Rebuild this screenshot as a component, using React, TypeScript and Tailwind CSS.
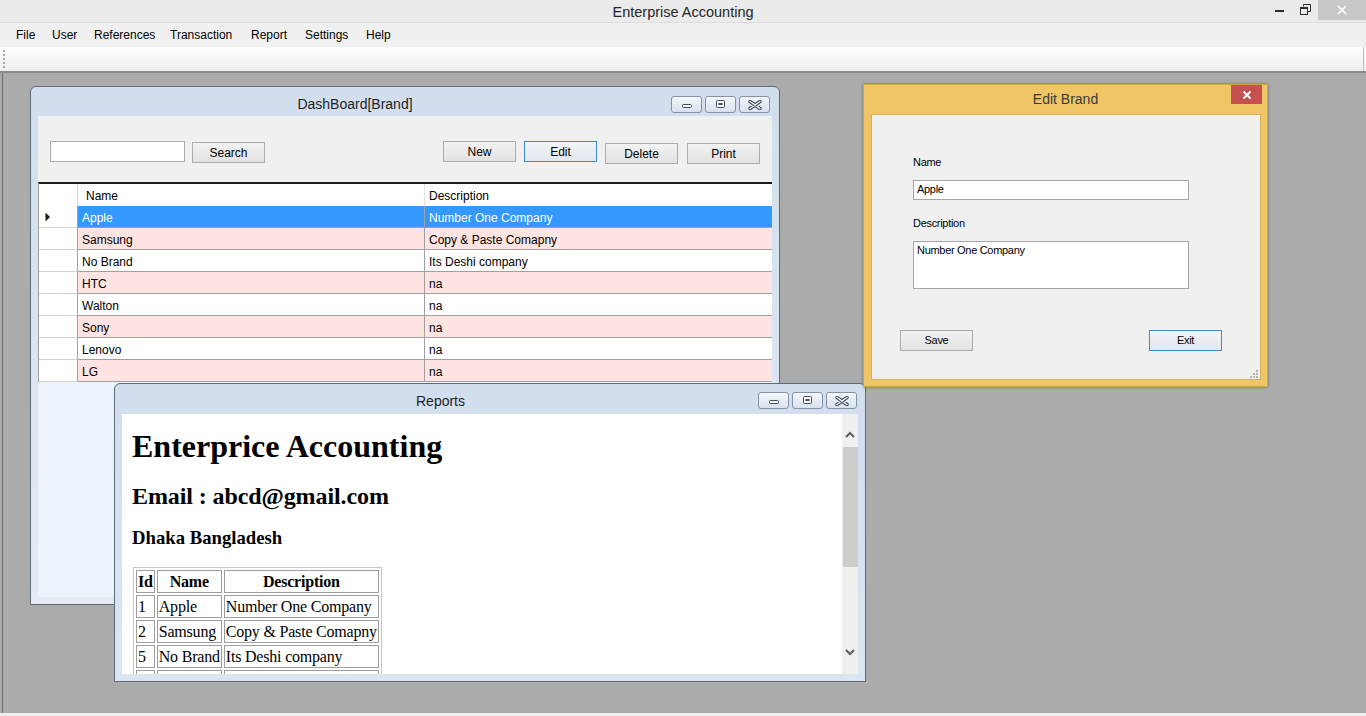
import React from 'react';

const rows = [
  { name: 'Apple', desc: 'Number One Company' },
  { name: 'Samsung', desc: 'Copy & Paste Comapny' },
  { name: 'No Brand', desc: 'Its Deshi company' },
  { name: 'HTC', desc: 'na' },
  { name: 'Walton', desc: 'na' },
  { name: 'Sony', desc: 'na' },
  { name: 'Lenovo', desc: 'na' },
  { name: 'LG', desc: 'na' },
];

const reportRows = [
  { id: '1', name: 'Apple', desc: 'Number One Company' },
  { id: '2', name: 'Samsung', desc: 'Copy & Paste Comapny' },
  { id: '5', name: 'No Brand', desc: 'Its Deshi company' },
  { id: '', name: '', desc: '' },
];

function CtlBtn({ kind }: { kind: 'min' | 'max' | 'close' }) {
  return (
    <div className="w-[31px] h-[17px] rounded-[3px] border border-[#8593a8] bg-linear-to-b from-[#f5f8fc] to-[#d7e1ee] flex items-center justify-center">
      {kind === 'min' && (
        <svg width="12" height="8" viewBox="0 0 12 8">
          <rect x="1.5" y="3.5" width="9" height="3" rx="1" fill="#ffffff" stroke="#3e4b5e" />
        </svg>
      )}
      {kind === 'max' && (
        <svg width="11" height="9" viewBox="0 0 11 9">
          <rect x="1.5" y="0.5" width="8" height="7" rx="1" fill="#ffffff" stroke="#3e4b5e" />
          <rect x="3.5" y="3" width="4" height="2" fill="#3e4b5e" />
        </svg>
      )}
      {kind === 'close' && (
        <svg width="14" height="10" viewBox="0 0 14 10">
          <path d="M2 1.5 L12 8.5 M12 1.5 L2 8.5" stroke="#3e4b5e" strokeWidth="3.4" strokeLinecap="round" />
          <path d="M2 1.5 L12 8.5 M12 1.5 L2 8.5" stroke="#ffffff" strokeWidth="1.4" strokeLinecap="round" />
        </svg>
      )}
    </div>
  );
}

function MdiTitle({ title, btnClass }: { title: string; btnClass: string }) {
  return (
    <div className="flex items-start h-full">
      <div className="flex-1 pl-[8px] mt-[8px] text-center text-[14px] leading-[18px] text-[#1e1e1e]">{title}</div>
      <div className={btnClass}>
        <CtlBtn kind="min" />
        <CtlBtn kind="max" />
        <CtlBtn kind="close" />
      </div>
    </div>
  );
}

function Btn({ label, cls, focused }: { label: string; cls: string; focused?: boolean }) {
  return (
    <div
      className={
        'w-[73px] h-[21px] flex items-center justify-center pt-[1px] text-[12px] leading-[14px] border bg-linear-to-b ' +
        (focused ? 'border-[#3d8ad6] from-[#f1f4f8] to-[#e3e8ee] ' : 'border-[#acacac] from-[#f2f2f2] to-[#e2e2e2] ') +
        cls
      }
    >
      {label}
    </div>
  );
}

function Dashboard() {
  return (
    <div className="absolute left-[30px] top-[13px] w-[750px] h-[519px] rounded-t-[6px] border border-[#5f6a78] bg-linear-to-b from-[#d2deed] to-[#e2ebf6] flex flex-col">
      <div className="h-[29px] shrink-0">
        <MdiTitle title="DashBoard[Brand]" btnClass="flex gap-[3px] mr-[9px] mt-[9px]" />
      </div>
      <div className="mx-[7px] mb-[7px] flex-1 flex flex-col bg-[#edf3fa] overflow-hidden">
        <div className="h-[66px] shrink-0 bg-[#f0f0f0] flex items-start">
          <div className="ml-[12px] mt-[25px] w-[135px] h-[21px] bg-white border border-[#a9a9a9]" />
          <Btn label="Search" cls="ml-[7px] mt-[26px]" />
          <Btn label="New" cls="ml-[178px] mt-[25px]" />
          <Btn label="Edit" cls="ml-[8px] mt-[25px]" focused />
          <Btn label="Delete" cls="ml-[8px] mt-[27px]" />
          <Btn label="Print" cls="ml-[9px] mt-[27px]" />
        </div>
        <div className="border-t-2 border-[#1c1c1c] border-l border-l-[#a0a0a0] text-[12px]">
          <div className="grid grid-cols-[39px_347px_348px] h-[22px] bg-white">
            <div className="border-r border-[#d4d4d4]" />
            <div className="border-r border-[#e2e2e2] pl-[8px] pt-[3px] leading-[18px]">Name</div>
            <div className="pl-[4px] pt-[3px] leading-[18px]">Description</div>
          </div>
          {rows.map((r, i) => {
            const sel = i === 0;
            const bg = sel ? 'bg-[#3399ff] text-white' : i % 2 === 1 ? 'bg-[#ffe4e1]' : 'bg-white';
            return (
              <div key={r.name} className="grid grid-cols-[39px_347px_348px] h-[22px]">
                <div className="bg-white border-r border-r-[#a0a0a0] border-b border-b-[#d4d4d4] flex items-center pl-[6px]">
                  {sel && (
                    <svg width="6" height="10" viewBox="0 0 6 10">
                      <path d="M0.5 0.5 L5 5 L0.5 9.5 Z" fill="#1a1a1a" />
                    </svg>
                  )}
                </div>
                <div className={'border-r border-b border-[#a0a0a0] pl-[4px] pt-[3px] leading-[18px] ' + bg}>{r.name}</div>
                <div className={'border-r border-b border-[#a0a0a0] pl-[4px] pt-[3px] leading-[18px] ' + bg}>{r.desc}</div>
              </div>
            );
          })}
        </div>
        <div className="flex-1 bg-[#edf3fa]" />
      </div>
    </div>
  );
}

function Reports() {
  return (
    <div className="absolute left-[114px] top-[310px] w-[752px] h-[299px] rounded-t-[6px] border border-[#5f6a78] bg-linear-to-b from-[#d2deed] to-[#dbe6f3] flex flex-col">
      <div className="h-[30px] shrink-0">
        <MdiTitle title="Reports" btnClass="flex gap-[3px] mr-[8px] mt-[8px]" />
      </div>
      <div className="mx-[7px] mb-[7px] flex-1 flex bg-white overflow-hidden">
        <div className="flex-1 overflow-hidden pl-[10px] font-['Liberation_Serif','Times_New_Roman',serif] text-black">
          <div className="pt-[16px] text-[32px] leading-[32px] font-bold">Enterprice Accounting</div>
          <div className="mt-[22px] text-[24px] leading-[24px] font-bold tracking-[-0.1px]">Email : abcd@gmail.com</div>
          <div className="mt-[20px] text-[18.72px] leading-[19px] font-bold">Dhaka Bangladesh</div>
          <table className="mt-[20px] ml-[1px] border border-[#c6c6c6] border-separate border-spacing-[2px] text-[16px] leading-[19px] tracking-[-0.2px]">
            <thead>
              <tr>
                <th className="border border-[#9d9d9d] p-[1px] font-bold text-center">Id</th>
                <th className="border border-[#9d9d9d] p-[1px] font-bold text-center">Name</th>
                <th className="border border-[#9d9d9d] p-[1px] font-bold text-center">Description</th>
              </tr>
            </thead>
            <tbody>
              {reportRows.map((r, i) => (
                <tr key={i}>
                  <td className="border border-[#9d9d9d] p-[1px] h-[23px]">{r.id}</td>
                  <td className="border border-[#9d9d9d] p-[1px] h-[23px]">{r.name}</td>
                  <td className="border border-[#9d9d9d] p-[1px] h-[23px]">{r.desc}</td>
                </tr>
              ))}
            </tbody>
          </table>
        </div>
        <div className="w-[16px] shrink-0 bg-[#f0f0f0] flex flex-col items-center">
          <div className="h-[33px] w-full flex items-start justify-center pt-[17px]">
            <svg width="10" height="7" viewBox="0 0 10 7">
              <path d="M1 6 L5 2 L9 6" stroke="#606060" strokeWidth="2" fill="none" />
            </svg>
          </div>
          <div className="w-[15px] h-[120px] bg-[#cdcdcd]" />
          <div className="flex-1" />
          <div className="h-[30px] w-full flex items-start justify-center pt-[5px]">
            <svg width="10" height="7" viewBox="0 0 10 7">
              <path d="M1 1 L5 5 L9 1" stroke="#606060" strokeWidth="2" fill="none" />
            </svg>
          </div>
        </div>
      </div>
    </div>
  );
}

function EditBrand() {
  return (
    <div className="absolute left-[863px] top-[11px] w-[405px] h-[303px] bg-[#f0c566] border border-[#cfa341] flex flex-col shadow-[0_0_3px_rgba(0,0,0,0.35)]">
      <div className="h-[29px] shrink-0 grid grid-cols-[1fr_auto_1fr]">
        <div />
        <div className="text-[14px] leading-[29px] text-[#3a3a3a]">Edit Brand</div>
        <div className="flex justify-end items-start">
          <div className="w-[31px] h-[19px] mr-[5px] bg-[#c75050] flex items-center justify-center">
            <svg width="10" height="10" viewBox="0 0 10 10">
              <path d="M1.5 1.5 L8.5 8.5 M8.5 1.5 L1.5 8.5" stroke="#ffffff" strokeWidth="1.8" />
            </svg>
          </div>
        </div>
      </div>
      <div className="relative ml-[7px] mr-[6px] mb-[6px] flex-1 bg-[#f0f0f0] border border-[#d6b158] text-[11px] tracking-[-0.3px]">
        <div className="flex flex-col pl-[41px]">
          <div className="mt-[41px] leading-[13px]">Name</div>
          <div className="mt-[11px] w-[276px] h-[20px] bg-white border border-[#a6a6a6] pl-[3px] leading-[17px]">Apple</div>
          <div className="mt-[17px] leading-[13px]">Description</div>
          <div className="mt-[11px] w-[276px] h-[48px] bg-white border border-[#a6a6a6] pl-[3px] pt-[2px] leading-[13px]">Number One Company</div>
        </div>
        <div className="flex items-start mt-[41px] pl-[28px]">
          <div className="w-[73px] h-[21px] flex items-center justify-center border border-[#acacac] bg-linear-to-b from-[#f2f2f2] to-[#e2e2e2]">Save</div>
          <div className="ml-[176px] w-[73px] h-[21px] flex items-center justify-center border border-[#3d8ad6] bg-linear-to-b from-[#f1f4f8] to-[#e3e8ee]">Exit</div>
        </div>
        <div className="absolute right-[2px] bottom-[1px] w-[9px] h-[9px]">
          <svg width="9" height="9" viewBox="0 0 9 9">
            <rect x="7" y="1" width="2" height="2" fill="#b4b4b4" />
            <rect x="4" y="4" width="2" height="2" fill="#b4b4b4" />
            <rect x="7" y="4" width="2" height="2" fill="#b4b4b4" />
            <rect x="1" y="7" width="2" height="2" fill="#b4b4b4" />
            <rect x="4" y="7" width="2" height="2" fill="#b4b4b4" />
            <rect x="7" y="7" width="2" height="2" fill="#b4b4b4" />
          </svg>
        </div>
      </div>
    </div>
  );
}

export default function App() {
  const menu: [string, string][] = [
    ['File', 'w-[36px]'],
    ['User', 'w-[42px]'],
    ['References', 'w-[76px]'],
    ['Transaction', 'w-[81px]'],
    ['Report', 'w-[54px]'],
    ['Settings', 'w-[61px]'],
    ['Help', 'w-[40px]'],
  ];
  return (
    <div className="w-[1366px] h-[716px] flex flex-col overflow-hidden bg-[#ababab] font-['Liberation_Sans',Arial,sans-serif] text-black">
      <div className="h-[23px] shrink-0 bg-[#ebebeb] border-b border-[#dcdcdc] grid grid-cols-[1fr_auto_1fr]">
        <div />
        <div className="text-[14.5px] leading-[22px] text-[#262626] pt-[1px]">Enterprise Accounting</div>
        <div className="flex justify-end items-start">
          <div className="w-[26px] h-[20px] flex items-start justify-center pt-[10px]">
            <div className="w-[9px] h-[2px] bg-[#2d2d2d]" />
          </div>
          <div className="w-[26px] h-[20px] flex items-start justify-center pt-[4px]">
            <svg width="11" height="11" viewBox="0 0 11 11" fill="none" stroke="#2d2d2d">
              <path d="M3.5 2.5 V0.5 H10.5 V7.5 H8" />
              <rect x="0.5" y="3.5" width="7" height="7" />
              <path d="M0.5 4.5 H7.5" />
            </svg>
          </div>
          <div className="w-[48px] h-[20px] bg-[#c7c7c7] flex items-center justify-center">
            <svg width="10" height="10" viewBox="0 0 10 10">
              <path d="M1 1 L9 9 M9 1 L1 9" stroke="#ffffff" strokeWidth="1.6" />
            </svg>
          </div>
        </div>
      </div>
      <div className="h-[24px] shrink-0 bg-[#f0f0f0] flex items-center pl-[16px] text-[12px]">
        {menu.map(([m, w]) => (
          <div key={m} className={w + ' leading-[16px]'}>{m}</div>
        ))}
      </div>
      <div className="h-[26px] shrink-0 bg-linear-to-b from-[#fdfdfd] to-[#eeeeee] border-b-2 border-b-[#8a8a8a] flex">
        <div className="w-[1364px] border-r border-[#bdbdbd] flex items-stretch">
          <div className="ml-[3px] my-[3px] w-[2px] border-l-2 border-dotted border-[#a8a8a8]" />
        </div>
      </div>
      <div className="relative flex-1 shadow-[inset_2px_0_0_#ababab,inset_3px_0_0_#6e6e6e]">
        <Dashboard />
        <Reports />
        <EditBrand />
      </div>
      <div className="h-[3px] shrink-0 bg-[#f0f0f0]" />
    </div>
  );
}
